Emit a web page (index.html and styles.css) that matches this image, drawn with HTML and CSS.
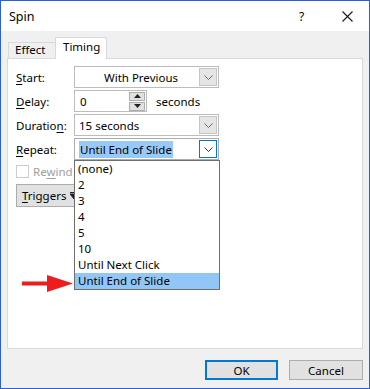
FILE: index.html
```html
<!DOCTYPE html>
<html>
<head>
<meta charset="utf-8">
<link rel="stylesheet" href="styles.css">
</head>
<body>
<div class="window">
  <div class="titlebar">
    <span class="title">Spin</span>
    <span class="help">?</span>
    <svg class="close" width="11" height="11" viewBox="0 0 11 11"><path d="M0.5 0.5 L10.5 10.5 M10.5 0.5 L0.5 10.5" stroke="#1a1a1a" stroke-width="1.1" fill="none"/></svg>
  </div>
  <div class="body">
    <div class="tabs">
      <div class="tab">Effect</div>
      <div class="tab active">Timing</div>
    </div>
    <div class="panel">
      <div class="row">
        <span class="label"><u>S</u>tart:</span>
        <div class="combo centered">
          <span class="value">With Previous</span>
          <span class="dd"><svg width="9" height="5" viewBox="0 0 9 5"><path d="M0.5 0.5 L4.5 4.5 L8.5 0.5" stroke="#6b6b6b" fill="none"/></svg></span>
        </div>
      </div>
      <div class="row">
        <span class="label"><u>D</u>elay:</span>
        <div class="spin-box">
          <span class="value">0</span>
          <span class="spinner">
            <span class="sp"><svg width="7" height="4" viewBox="0 0 7 4"><path d="M0 4 L3.5 0 L7 4Z" fill="#222"/></svg></span>
            <span class="sp"><svg width="7" height="4" viewBox="0 0 7 4"><path d="M0 0 L3.5 4 L7 0Z" fill="#222"/></svg></span>
          </span>
        </div>
        <span class="unit">seconds</span>
      </div>
      <div class="row">
        <span class="label">Duratio<u>n</u>:</span>
        <div class="combo">
          <span class="value">15 seconds</span>
          <span class="dd"><svg width="9" height="5" viewBox="0 0 9 5"><path d="M0.5 0.5 L4.5 4.5 L8.5 0.5" stroke="#6b6b6b" fill="none"/></svg></span>
        </div>
      </div>
      <div class="row">
        <span class="label"><u>R</u>epeat:</span>
        <div class="combo focused">
          <span class="value"><span class="sel">Until End of Slide</span></span>
          <span class="dd open"><svg width="9" height="5" viewBox="0 0 9 5"><path d="M0.5 0.5 L4.5 4.5 L8.5 0.5" stroke="#333" fill="none"/></svg></span>
        </div>
      </div>
      <div class="check-row">
        <span class="checkbox"></span>
        <span class="check-label">Re<u>w</u>ind</span>
      </div>
      <div class="trigger-row">
        <span class="trigger-btn"><span><u>T</u>riggers</span>
          <svg width="8" height="8" viewBox="0 0 8 8"><path d="M0 0.5 H8 M0 2 H8 L4 7 Z" stroke="#222" stroke-width="1" fill="#222"/></svg>
        </span>
      </div>

      <ul class="list">
        <li>(none)</li>
        <li>2</li>
        <li>3</li>
        <li>4</li>
        <li>5</li>
        <li>10</li>
        <li>Until Next Click</li>
        <li class="hl">Until End of Slide</li>
      </ul>
      <svg class="arrow" width="52" height="17" viewBox="0 0 52 17"><path d="M0 6.5 H25 V0 L51 8.5 L25 17 V10.5 H0 Z" fill="#ee1c1c"/></svg>
    </div>
    <div class="buttons">
      <span class="btn ok">OK</span>
      <span class="btn">Cancel</span>
    </div>
  </div>
</div>
</body>
</html>
```
FILE: styles.css
```css
* { box-sizing: border-box; }
html, body { margin: 0; padding: 0; }
body {
  width: 370px;
  height: 389px;
  font-family: "Noto Sans", "DejaVu Sans", sans-serif;
  font-size: 11.5px;
  color: #000;
  background: #fff;
}
u { text-decoration: underline; text-underline-offset: 2px; }
.window {
  width: 370px;
  height: 389px;
  border: 1px solid #2a5fd6;
  display: flex;
  flex-direction: column;
}
.titlebar {
  height: 30px;
  background: #fff;
  display: flex;
  align-items: center;
  padding-left: 8px;
}
.title { font-size: 12.5px; flex: 1; }
.help { width: 12px; margin-right: 31px; font-size: 12px; }
.close { margin-right: 16px; }
.body {
  flex: 1;
  background: #f0f0f0;
  padding: 6px 6px 0 6px;
  display: flex;
  flex-direction: column;
}
.tabs {
  display: flex;
  align-items: flex-end;
  padding-left: 1px;
  height: 21px;
}
.tab {
  height: 16px;
  width: 47px;
  border: 1px solid #d9d9d9;
  border-right: none;
  border-bottom: none;
  padding-left: 6px;
  line-height: 14px;
  background: #f0f0f0;
}
.tab.active {
  height: 22px;
  width: 52px;
  border-right: 1px solid #d9d9d9;
  background: #fff;
  margin-bottom: -1px;
  position: relative;
  z-index: 1;
  padding-left: 7px;
  line-height: 17px;
}
.panel {
  position: relative;
  height: 291px;
  background: #fff;
  border: 1px solid #d9d9d9;
  padding: 7px 0 0 8px;
}
.row {
  display: flex;
  align-items: center;
  height: 22px;
  margin-bottom: 2px;
}
.label { width: 58px; }
.combo {
  width: 145px;
  height: 22px;
  border: 1px solid #bcbcbc;
  background: #fff;
  display: flex;
  align-items: center;
  padding: 0 1px 0 4px;
}
.combo .value { flex: 1; }
.combo.centered .value { text-align: center; padding-left: 4px; }
.dd {
  width: 18px;
  height: 18px;
  background: #e5e5e5;
  border: 1px solid #c5c5c5;
  display: flex;
  align-items: center;
  justify-content: center;
}
.dd.open { background: #fff; border: 1px solid #0078d7; }
.combo.focused { border-color: #adadad; }
.sel { background: #99c9f8; padding: 1px 1px; }
.spin-box {
  width: 73px;
  height: 22px;
  border: 1px solid #bcbcbc;
  display: flex;
  align-items: center;
  padding: 0 1px 0 5px;
}
.spin-box .value { flex: 1; }
.spinner {
  width: 16px;
  height: 19px;
  display: flex;
  flex-direction: column;
  gap: 1px;
}
.sp {
  flex: 1;
  background: #e1e1e1;
  border: 1px solid #adadad;
  display: flex;
  align-items: center;
  justify-content: center;
}
.unit { margin-left: 9px; }
.check-row {
  display: flex;
  align-items: center;
  height: 19px;
  margin-top: 1px;
}
.checkbox {
  width: 13px;
  height: 13px;
  border: 1px solid #cccccc;
  background: #fff;
}
.check-label { margin-left: 4px; color: #a0a0a0; }
.trigger-row { margin-top: 3px; }
.trigger-btn {
  display: inline-flex;
  align-items: center;
  gap: 4px;
  width: 66px;
  height: 23px;
  background: #e1e1e1;
  border: 1px solid #adadad;
  padding-left: 5px;
}
.list {
  position: absolute;
  left: 66px;
  top: 101px;
  width: 146px;
  margin: 0;
  padding: 0;
  list-style: none;
  background: #fff;
  border: 1px solid #6e6e6e;
}
.list li {
  height: 16px;
  line-height: 16px;
  padding-left: 3px;
}
.list li.hl { background: #91c6f6; }
.arrow {
  position: absolute;
  left: 14px;
  top: 216px;
}
.buttons {
  display: flex;
  justify-content: flex-end;
  gap: 11px;
  margin-top: 11px;
}
.btn {
  width: 74px;
  height: 20px;
  background: #e1e1e1;
  border: 1px solid #adadad;
  display: flex;
  align-items: center;
  justify-content: center;
}
.btn.ok { width: 73px; border: 2px solid #0078d7; }
```
